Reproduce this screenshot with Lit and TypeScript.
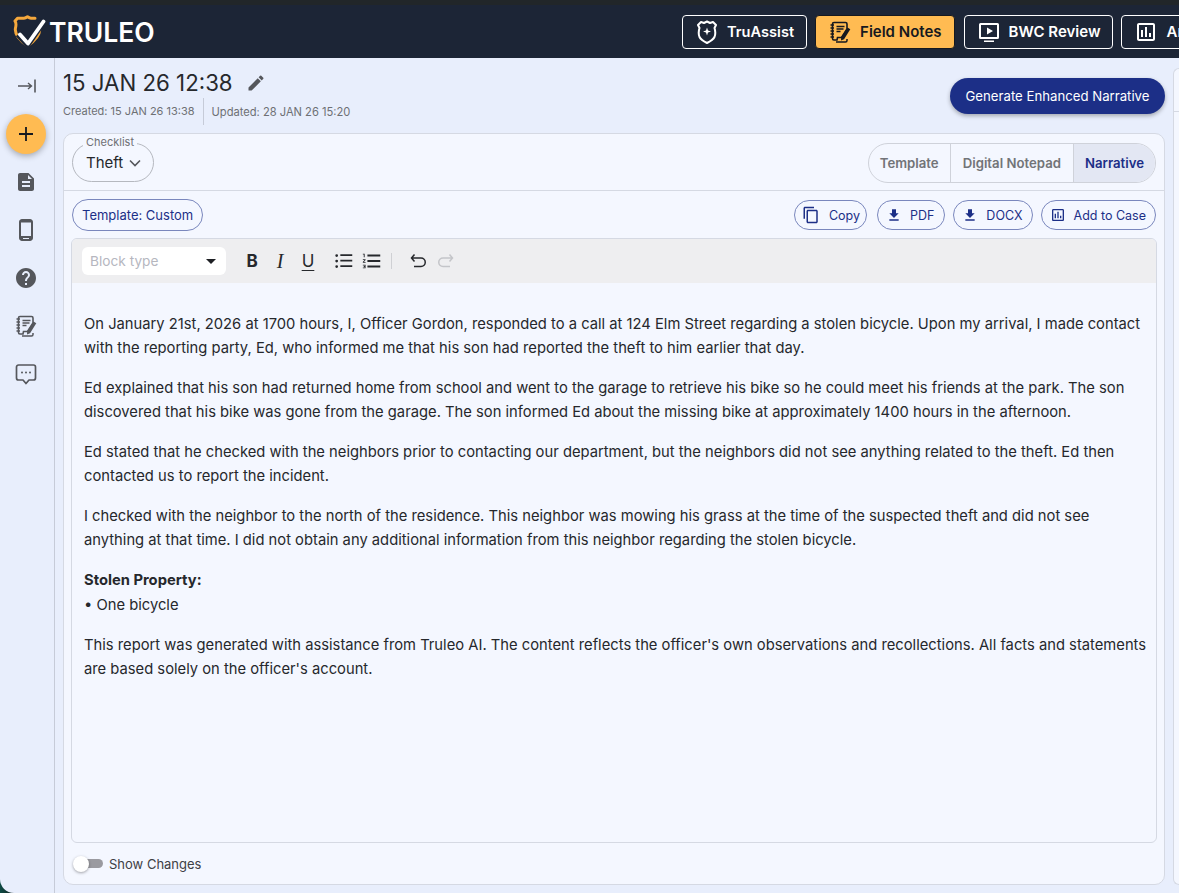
import { LitElement, html, css, svg } from "lit";
import { customElement } from "lit/decorators.js";

const ic = (d: string, size = 24, cls = "") => html`<svg class=${cls} width=${size} height=${size} viewBox="0 0 24 24" fill="currentColor"><path d=${d}></path></svg>`;
const DOWNLOAD = "M19 9.5h-4V3.5H9v6H5l7 7 7-7zM5 18.5v2h14v-2H5z";
const COPY = "M16 1H4c-1.1 0-2 .9-2 2v14h2V3h12V1zm3 4H8c-1.1 0-2 .9-2 2v14c0 1.100.9 2 2 2h11c1.100 0 2-.9 2-2V7c0-1.100-.9-2-2-2zm0 16H8V7h11v14z";
const CHART = "M19 3H5c-1.100 0-2 .9-2 2v14c0 1.100.9 2 2 2h14c1.100 0 2-.9 2-2V5c0-1.100-.9-2-2-2zm0 16H5V5h14v14zM7 10h2v7H7zm4-3h2v10h-2zm4 6h2v4h-2z";

const notebook = svg`<path d="M6 2.500h11.500a1.500 1.500 0 0 1 1.500 1.500v5l-5.500 8.500H9.500l-.500 2.500H6a1.500 1.500 0 0 1-1.500-1.500V4A1.500 1.500 0 0 1 6 2.500z" fill="none" stroke="currentColor" stroke-width="1.600"/>
<path d="M2.500 5h3.500M2.500 8h3.500M2.500 11h3.500M2.500 14h3.500M2.500 17h3.500" stroke="currentColor" stroke-width="1.300" fill="none"/>
<path d="M8.500 6.500h8M8.500 9h7M8.500 11.500h4" stroke="currentColor" stroke-width="1.500" fill="none"/>
<path d="M19.500 7.500l2.800 1.700-6.300 10-3 1.300.2-3.200z" fill="currentColor"/>
<path d="M19 19v1.500a1.500 1.500 0 0 1-1.500 1.500H8" fill="none" stroke="currentColor" stroke-width="1.500"/>`;

@customElement("app-root")
export class AppRoot extends LitElement {
  static styles = css`
    :host { display: block; width: 1179px; height: 893px; overflow: hidden; position: relative; background: #e8eefc;
      font-family: Inter, "Liberation Sans", sans-serif; color: #26282c; }
    * { box-sizing: border-box; }
    svg { display: block; flex: none; }
    .strip { height: 5px; background: #212629; }
    .topbar { height: 53px; background: #1c2536; display: flex; align-items: center; padding-left: 13px; overflow: hidden; }
    .logo { display: flex; align-items: center; gap: 3px; color: #fff; font-weight: 600; font-size: 26.500px; width: 669px; flex: none; }
    .nav { display: flex; gap: 8px; flex: none; }
    .navbtn { height: 34px; border: 1px solid #fff; border-radius: 4px; display: flex; align-items: center; gap: 8px; color: #fff; font-weight: 600; font-size: 15px; padding: 0 12px; white-space: nowrap; }
    .navbtn.active { background: #ffbb52; color: #16191f; border-color: #16191f; }
    .navbtn.ta { font-size: 14.600px; }
    .navbtn.bwc { margin-left: 1px; }
    .body { display: flex; height: 835px; }
    .side { width: 55px; flex: none; border-right: 1px solid #c6cbd8; display: flex; flex-direction: column; align-items: center; color: #55575c; position: relative; }
    .collapse { margin-top: 16px; height: 24px; }
    .fab { width: 40px; height: 40px; border-radius: 50%; background: #ffbb52; color: #16191f; margin-top: 16px; margin-bottom: 16px; display: flex; align-items: center; justify-content: center; box-shadow: 0 2px 6px rgba(0,0,0,.3); margin-left: -2px; }
    .sideitems { display: flex; flex-direction: column; align-items: center; gap: 24px; margin-left: -2px; }
    .main { width: 1110px; flex: none; padding: 0 0 0 8px; }
    .head { height: 75px; display: flex; justify-content: space-between; }
    .title-row { display: flex; align-items: center; gap: 13px; height: 27px; margin-top: 11px; }
    h1 { margin: 0; font-size: 22.250px; font-weight: 400; line-height: 27px; }
    .pen { color: #55575c; }
    .meta { display: flex; align-items: center; font-size: 11px; color: #6e7074; margin-top: 2px; height: 27px; }
    .meta span:first-child { padding-right: 8px; border-right: 1px solid #c6cbd8; line-height: 27px; }
    .meta span:last-child { padding-left: 8px; font-size: 11.150px; }
    .gen { margin-top: 20px; height: 36px; width: 215px; border-radius: 18px; background: #1c2f87; color: #fff; font-size: 13.200px; display: flex; align-items: center; justify-content: center; box-shadow: 0 2px 4px rgba(0,0,0,.3); }
    .card { width: 1102px; height: 752px; border: 1px solid #d5d9e3; border-radius: 10px; background: #f4f7ff; display: flex; flex-direction: column; }
    .cardhead { height: 57px; border-bottom: 1px solid #d5d9e3; display: flex; justify-content: space-between; align-items: flex-start; padding: 9px 8px 0 8px; flex: none; }
    .select { position: relative; height: 39px; width: 82px; border: 1px solid #b5b8bf; border-radius: 20px; display: flex; align-items: center; padding-left: 13px; gap: 5px; font-size: 15px; }
    .select label { position: absolute; left: 10px; top: -9px; font-size: 11px; color: #6e7074; background: #f4f7ff; padding: 0 3px; line-height: 14px; }
    .tabs { display: flex; height: 40px; border: 1px solid #cfd2da; border-radius: 20px; overflow: hidden; font-size: 13.200px; font-weight: 600; color: #727478; }
    .tab { display: flex; align-items: center; padding: 0 11px; border-left: 1px solid #cfd2da; }
    .tab:first-child { border-left: none; }
    .tab.mid { padding: 0 12px; }
    .tab.on { background: #e3e7f3; color: #1c2f87; }
    .tools { height: 47px; display: flex; justify-content: space-between; align-items: center; padding: 0 8px; flex: none; }
    .pill { height: 30px; border: 1px solid #7a87bd; border-radius: 15px; color: #1c2f87; font-size: 12.500px; display: flex; align-items: center; white-space: nowrap; padding-top: 1px; }
    .pill.tpl { padding: 1px 9px 0; height: 32px; border-radius: 16px; font-size: 13px; }
    .pills { display: flex; gap: 8px; }
    .pill.ic { padding-left: 8px; padding-right: 9px; gap: 8px; }
    .pill.ic svg { margin-top: -1px; }
    .pill.ic.cp { padding-right: 6px; gap: 10px; margin-right: 2px; }
    .pill.ic.pdf { padding-right: 10px; }
    .copy { margin: -1px; }
    .editor { margin: 0 7px; height: 605px; border: 1px solid #d5d9e3; border-radius: 6px; overflow: hidden; flex: none; display: flex; flex-direction: column; }
    .bar { height: 44px; background: #eeeef0; display: flex; align-items: center; padding-left: 10px; flex: none; color: #26282c; }
    .block { width: 144px; height: 28px; background: #fff; border-radius: 6px; display: flex; align-items: center; justify-content: space-between; padding: 0 10px 0 8px; color: #b6b7bf; font-size: 13.700px; margin-right: 16px; }
    .caret { width: 0; height: 0; border: 5px solid transparent; border-top: 5px solid #1d1f23; border-bottom: none; }
    .bi { width: 20px; height: 20px; display: flex; align-items: center; justify-content: center; margin-right: 8px; font-size: 17px; line-height: 1; }
    .b { font-weight: 700; }
    .i { font-family: "Liberation Serif", serif; font-style: italic; font-size: 20px; }
    .u { text-decoration: underline; text-underline-offset: 3px; margin-right: 16px; }
    .list { margin: 0 -1px; }
    .gap8 { width: 8px; }
    .gap6 { width: 6px; }
    .vsep { width: 1px; height: 16px; background: #cfd0d4; margin: 0 17px 0 9px; }
    .text { padding: 29px 8px 0 12px; font-size: 14.750px; line-height: 24px; color: #26282c; }
    .text p { margin: 0 0 16px; }
    .text strong { font-weight: 700; }
    .text .tight { line-height: 25px; margin-bottom: 15px; }
    .foot { flex: 1; display: flex; align-items: center; padding-left: 9px; gap: 6px; font-size: 13px; color: #3e4045; }
    .toggle { position: relative; width: 30px; height: 16px; }
    .toggle i { position: absolute; left: 3px; top: 3px; right: 0; height: 9px; border-radius: 5px; background: #9a9aa0; }
    .toggle b { position: absolute; left: 0; top: 0; width: 16px; height: 16px; border-radius: 50%; background: #fff; box-shadow: 0 1px 3px rgba(0,0,0,.35); }
    .right { flex: 1; margin: 10px 0 8px 8px; border: 1px solid #d5d9e3; border-right: none; border-radius: 10px 0 0 10px; background: #f4f7ff; position: relative; }
    .right i { display: block; height: 43px; border-bottom: 1px solid #d5d9e3; }
    .corner { position: absolute; left: 0; bottom: 0; width: 14px; height: 14px; background: linear-gradient(90deg, #0d4a44, #15201f); }
    .corner::after { content: ""; position: absolute; inset: 0; background: #e8eefc; border-bottom-left-radius: 14px; }
  `;

  render() {
    return html`
      <div class="strip"></div>
      <div class="topbar">
        <div class="logo">
          <svg width="33" height="33" viewBox="0 0 33 33" fill="none">
            <path d="M22 3.200H18C17 3.200 15.500 2.500 14.500 1.800C13.500 2.500 12 3.200 11 3.200H4.500L2 6C3.500 8 3.200 10 2.500 13C1 20 9 27 14.500 31C20 27 28 20 26.500 13C26 11.500 26 10 26.500 9" stroke="#f5a83c" stroke-width="3" stroke-linejoin="round" stroke-linecap="round"/>
            <path d="M5.500 19l9 10L31 5" stroke="#1c2536" stroke-width="7"/>
            <path d="M7 19.500l8 9L30.500 6.500" stroke="#fff" stroke-width="3.800" stroke-linecap="round" stroke-linejoin="round"/>
          </svg>
          <span>TRULEO</span>
        </div>
        <div class="nav">
          <div class="navbtn ta">
            <svg width="24" height="24" viewBox="-1 0 24 24"><path d="M5 2l3 1 3-1.500L14 3l3-1 3 3-1.500 3c1 3 1.500 5 0 9-1.500 3-4.500 4.500-7.500 6-3-1.500-6-3-7.500-6-1.500-4-1-6 0-9L2 5z" fill="none" stroke="#fff" stroke-width="2" stroke-linejoin="round"/><path d="M11 7.500l1 3 3 1-3 1-1 3-1-3-3-1 3-1z" fill="#fff"/></svg>
            TruAssist
          </div>
          <div class="navbtn active"><svg width="24" height="24" viewBox="0 0 24 24">${notebook}</svg>Field Notes</div>
          <div class="navbtn bwc">
            <svg width="24" height="24" viewBox="0 0 24 24" fill="#fff"><path d="M3.500 3h17A1.500 1.500 0 0 1 22 4.500v13a1.500 1.500 0 0 1-1.500 1.500h-17A1.500 1.500 0 0 1 2 17.500v-13A1.500 1.500 0 0 1 3.500 3zM4 5v12h16V5zM10 7.500l6 3.500-6 3.500zM7 20.500h10V22H7z" fill-rule="evenodd"/></svg>
            BWC Review
          </div>
          <div class="navbtn">${ic(CHART, 24)} Analytics</div>
        </div>
      </div>
      <div class="body">
        <div class="side">
          <div class="collapse">
            <svg width="24" height="24" viewBox="0 0 24 24" fill="none" stroke="currentColor" stroke-width="1.400"><path d="M3 12h13M13 9l3.500 3-3.500 3"/><path d="M20 5.500v13" stroke-width="1.600"/></svg>
          </div>
          <div class="fab"><svg width="24" height="24" viewBox="0 0 24 24" fill="none" stroke="currentColor" stroke-width="1.800"><path d="M12 5v14M5 12h14"/></svg></div>
          <div class="sideitems">
            ${ic("M14.500 3H6c-1.100 0-2 .9-2 2v14c0 1.100.9 2 2 2h12c1.100 0 2-.9 2-2V8.500L14.500 3zM16 17H8v-2h8v2zm0-4H8v-2h8v2zm-2-4V5l4 4h-4z")}
            ${ic("M16 1H8C6.340 1 5 2.340 5 4v16c0 1.660 1.340 3 3 3h8c1.660 0 3-1.340 3-3V4c0-1.660-1.340-3-3-3zm1 17H7V4.500h10V18zM9 20h6v1H9z")}
            ${ic("M12 2C6.480 2 2 6.480 2 12s4.480 10 10 10 10-4.480 10-10S17.520 2 12 2zm1 17h-2v-2h2v2zm2.070-7.750l-.900.920C13.450 12.900 13 13.500 13 15h-2v-.500c0-1.100.450-2.100 1.170-2.830l1.240-1.260c.370-.360.590-.860.590-1.410 0-1.100-.900-2-2-2s-2 .900-2 2H8c0-2.210 1.790-4 4-4s4 1.790 4 4c0 .880-.360 1.680-.930 2.250z")}
            <svg width="24" height="24" viewBox="0 0 24 24">${notebook}</svg>
            <svg width="24" height="24" viewBox="0 0 24 24" fill="none"><path d="M4.500 3h15A2 2 0 0 1 21.500 5v11a2 2 0 0 1-2 2h-4.500L12 21.500 9 18H4.500a2 2 0 0 1-2-2V5a2 2 0 0 1 2-2z" stroke="currentColor" stroke-width="1.700" stroke-linejoin="round"/><circle cx="8" cy="10.500" r="1" fill="currentColor"/><circle cx="12" cy="10.500" r="1" fill="currentColor"/><circle cx="16" cy="10.500" r="1" fill="currentColor"/></svg>
          </div>
        </div>
        <div class="main">
          <div class="head">
            <div>
              <div class="title-row">
                <h1>15 JAN 26 12:38</h1>
                ${ic("M3 17.250V21h3.750L17.810 9.940l-3.750-3.750L3 17.250zM20.710 7.040a1 1 0 0 0 0-1.410l-2.340-2.340a1 1 0 0 0-1.410 0l-1.830 1.830 3.750 3.750 1.830-1.830z", 20, "pen")}
              </div>
              <div class="meta"><span>Created: 15 JAN 26 13:38</span><span>Updated: 28 JAN 26 15:20</span></div>
            </div>
            <div class="gen">Generate Enhanced Narrative</div>
          </div>
          <div class="card">
            <div class="cardhead">
              <div class="select">
                <label>Checklist</label>
                Theft
                <svg width="14" height="14" viewBox="0 0 14 14" fill="none" stroke="#55575c" stroke-width="1.600"><path d="M2 4.500l5 5 5-5"/></svg>
              </div>
              <div class="tabs">
                <div class="tab">Template</div>
                <div class="tab mid">Digital Notepad</div>
                <div class="tab on">Narrative</div>
              </div>
            </div>
            <div class="tools">
              <div class="pill tpl">Template: Custom</div>
              <div class="pills">
                <div class="pill ic cp">${ic(COPY, 18, "copy")}Copy</div>
                <div class="pill ic pdf">${ic(DOWNLOAD, 16)}PDF</div>
                <div class="pill ic">${ic(DOWNLOAD, 16)}DOCX</div>
                <div class="pill ic">${ic(CHART, 16)}Add to Case</div>
              </div>
            </div>
            <div class="editor">
              <div class="bar">
                <div class="block">Block type<span class="caret"></span></div>
                <div class="bi b">B</div>
                <div class="bi i">I</div>
                <div class="bi u">U</div>
                ${ic("M4 10.500a1.500 1.500 0 1 0 0 3 1.500 1.500 0 0 0 0-3zm0-6a1.500 1.500 0 1 0 0 3 1.500 1.500 0 0 0 0-3zm0 12a1.500 1.500 0 1 0 0 3 1.500 1.500 0 0 0 0-3zM8 18.500h13v-2H8v2zm0-6h13v-2H8v2zM8 4.500v2h13v-2H8z", 22, "list")}
                <span class="gap8"></span>
                ${ic("M2 17h2v.500H3v1h1v.500H2v1h3v-4H2v1zm1-9h1V4H2v1h1v3zm-1 3h1.800L2 13.100v.900h3v-1H3.200L5 10.900V10H2v1zm5-6v2h14V5H7zm0 14h14v-2H7v2zm0-6h14v-2H7v2z", 22, "list")}
                <span class="vsep"></span>
                <svg width="20" height="20" viewBox="0 0 20 20" fill="none" stroke="#26282c" stroke-width="1.500"><path d="M5.500 3.500L2.500 7l3 3.500M3 7h9a4 4 0 0 1 0 8.500H5"/></svg>
                <span class="gap6"></span>
                <svg width="20" height="20" viewBox="0 0 20 20" fill="none" stroke="#c4c5c9" stroke-width="1.500"><path d="M14.500 3.500L17.500 7l-3 3.500M17 7H8a4 4 0 0 0 0 8.500h7"/></svg>
              </div>
              <div class="text">
                <p>On January 21st, 2026 at 1700 hours, I, Officer Gordon, responded to a call at 124 Elm Street regarding a stolen bicycle. Upon my arrival, I made contact with the reporting party, Ed, who informed me that his son had reported the theft to him earlier that day.</p>
                <p>Ed explained that his son had returned home from school and went to the garage to retrieve his bike so he could meet his friends at the park. The son discovered that his bike was gone from the garage. The son informed Ed about the missing bike at approximately 1400 hours in the afternoon.</p>
                <p>Ed stated that he checked with the neighbors prior to contacting our department, but the neighbors did not see anything related to the theft. Ed then contacted us to report the incident.</p>
                <p>I checked with the neighbor to the north of the residence. This neighbor was mowing his grass at the time of the suspected theft and did not see anything at that time. I did not obtain any additional information from this neighbor regarding the stolen bicycle.</p>
                <p class="tight"><strong>Stolen Property:</strong><br>• One bicycle</p>
                <p>This report was generated with assistance from Truleo AI. The content reflects the officer's own observations and recollections. All facts and statements are based solely on the officer's account.</p>
              </div>
            </div>
            <div class="foot"><span class="toggle"><i></i><b></b></span>Show Changes</div>
          </div>
        </div>
        <div class="right"><i></i></div>
      </div>
      <div class="corner"></div>
    `;
  }
}
